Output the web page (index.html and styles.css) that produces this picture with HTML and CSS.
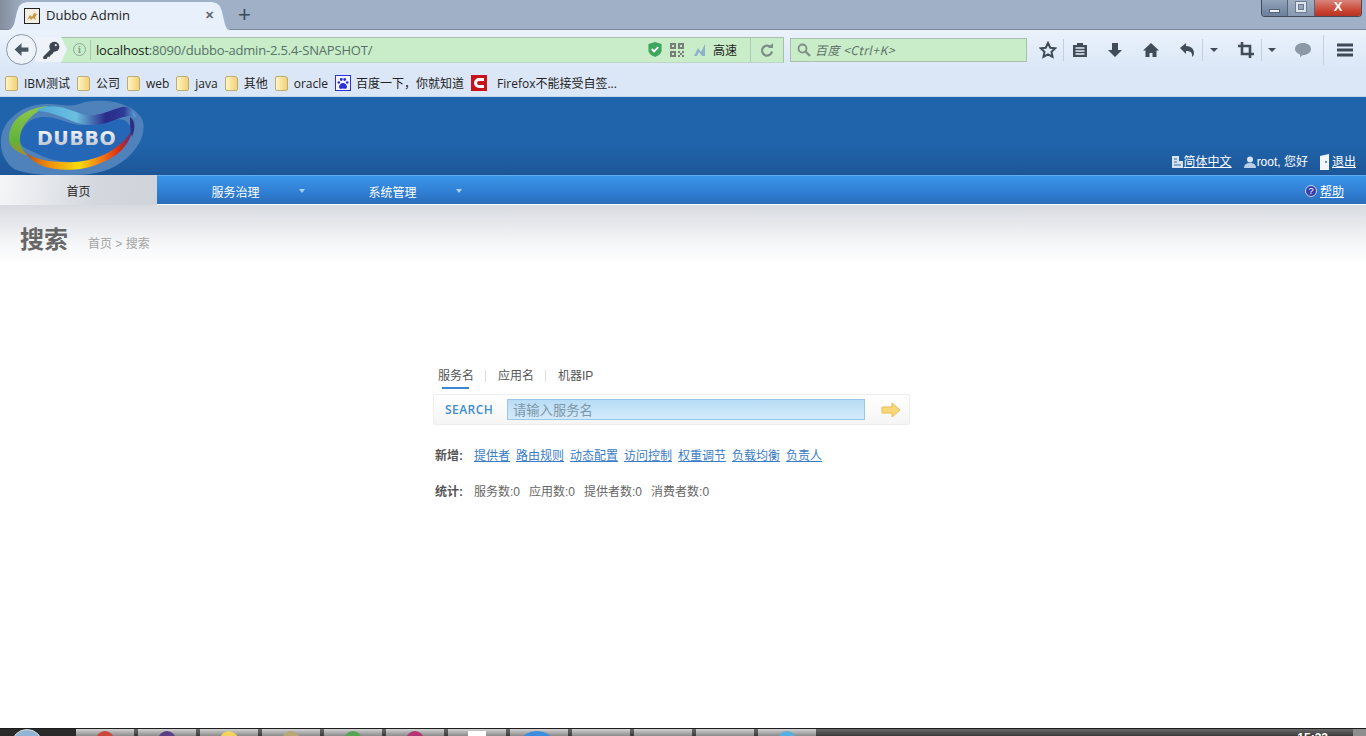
FILE: index.html
```html
<!DOCTYPE html>
<html lang="zh">
<head>
<meta charset="utf-8">
<title>Dubbo Admin</title>
<link rel="stylesheet" href="styles.css">
</head>
<body>
<div class="screen">
  <div class="browser">
    <div class="titlebar">
      <div class="tab">
        <svg class="favicon" viewBox="0 0 16 16"><rect x=".5" y=".5" width="15" height="15" fill="#f4efe2" stroke="#222"/><path d="M3 12l3-5 2 2 2-4 3 1-2 3 1 3-3-2-2 2-1-2z" fill="#c79440"/></svg>
        <span class="tab-title">Dubbo Admin</span>
        <span class="tab-close">✕</span>
      </div>
      <span class="new-tab">+</span>
      <div class="win-controls">
        <span class="win-btn"><i class="win-min"></i></span>
        <span class="win-btn win-mid"><i class="win-max"></i></span>
        <span class="win-btn win-close">X</span>
      </div>
    </div>
    <div class="toolbar">
      <div class="urlgroup">
        <span class="back">
          <svg viewBox="0 0 16 16" width="17" height="17"><path d="M8 2L1.500 8 8 14v-4h6.500V6H8z" fill="#4a5563"/></svg>
        </span>
        <span class="key">
          <svg viewBox="0 0 18 18" width="20" height="20"><circle cx="12" cy="6" r="4.500" fill="#3d4650"/><path d="M10 7L2 15v2h3l1-2h2l1-2h1l2-3z" fill="#3d4650"/><circle cx="13.300" cy="4.700" r="1" fill="#dfe8f2"/></svg>
        </span>
        <div class="urlbar">
          <span class="info">i</span>
          <span class="url"><b>localhost</b>:8090/dubbo-admin-2.5.4-SNAPSHOT/</span>
          <svg class="shield" viewBox="0 0 14 16" width="14" height="15"><path d="M0 2l7-2 7 2v7c0 3-3 5-7 7-4-2-7-4-7-7z" fill="#3ea65f"/><path d="M3.500 7.500l2.500 2.500 4.500-4.500" fill="none" stroke="#fff" stroke-width="2"/></svg>
          <svg class="qr" viewBox="0 0 14 14" width="14" height="14"><path d="M0 0h6v6H0zM8 0h6v6H8zM0 8h6v6H0zM8 8h2v2H8zM12 8h2v2h-2zM10 10h2v2h-2zM8 12h2v2H8zM12 12h2v2h-2z" fill="#777f78"/><path d="M2 2h2v2H2zM10 2h2v2h-2zM2 10h2v2H2z" fill="#c9edc9"/></svg>
          <svg class="speed" viewBox="0 0 14 14" width="14" height="14"><path d="M1 13L5 5l3 4 4-8v12H9L6 9l-2 4z" fill="#8fb0cf"/></svg>
          <span class="speed-text">高速</span>
          <span class="reload">
            <svg viewBox="0 0 14 14" width="14" height="14"><path d="M11 4.500A5 5 0 1 0 12 8.500" fill="none" stroke="#7b8f86" stroke-width="2.200"/><path d="M8 5h5V0z" fill="#7b8f86"/></svg>
          </span>
        </div>
      </div>
      <div class="searchbar">
        <svg viewBox="0 0 14 14" width="14" height="14"><circle cx="5.500" cy="5.500" r="4" fill="none" stroke="#7f8f85" stroke-width="1.800"/><path d="M8.500 8.500L13 13" stroke="#7f8f85" stroke-width="2.400"/></svg>
        <span class="search-hint">百度 &lt;Ctrl+K&gt;</span>
      </div>
      <div class="tools">
        <svg class="tool-star" viewBox="0 0 18 18" width="18" height="18"><path d="M9 2l2.200 4.700 5 .6-3.700 3.500 1 5.100L9 13.400l-4.500 2.500 1-5.100L1.800 7.300l5-.6z" fill="none" stroke="#3f4a57" stroke-width="2"/></svg>
        <i class="sep"></i>
        <svg class="tool-list" viewBox="0 0 16 16" width="16" height="16"><path d="M1 3h4V1h6v2h4v12H1z" fill="#414c59"/><path d="M3.500 6h9M3.500 9h9M3.500 12h9" stroke="#e4edf7" stroke-width="1.300"/></svg>
        <svg class="tool-down" viewBox="0 0 16 16" width="16" height="16"><path d="M5 1h6v7h4l-7 7-7-7h4z" fill="#414c59"/></svg>
        <svg class="tool-home" viewBox="0 0 16 16" width="16" height="16"><path d="M8 1L0 8.500h2.500V15h4v-4h3v4h4V8.500H16z" fill="#414c59"/></svg>
        <svg class="tool-undo" viewBox="0 0 16 16" width="16" height="16"><path d="M1 6l6-5v3c5 0 8 3 8 7 0 2-1 3-2 4 .5-4-1-6-6-6v3z" fill="#414c59"/></svg>
        <i class="sep sep-undo"></i>
        <span class="caret"></span>
        <svg class="tool-crop" viewBox="0 0 16 16" width="16" height="16"><path d="M4 0v12h12M0 4h12v12" fill="none" stroke="#414c59" stroke-width="2.600"/></svg>
        <i class="sep sep-crop"></i>
        <span class="caret caret-crop"></span>
        <svg class="tool-chat" viewBox="0 0 16 14" width="16" height="14"><path d="M8 0c4.500 0 8 2.500 8 6s-3.500 6-8 6l-3 2v-2.500C2 10.500 0 8.500 0 6c0-3.500 3.500-6 8-6z" fill="#8b98a6"/></svg>
        <i class="sep sep-menu"></i>
        <span class="hamburger"><i></i><i></i><i></i></span>
      </div>
    </div>
    <div class="bookmarks">
      <span class="bm"><i class="folder"></i>IBM测试</span>
      <span class="bm"><i class="folder"></i>公司</span>
      <span class="bm"><i class="folder"></i>web</span>
      <span class="bm"><i class="folder"></i>java</span>
      <span class="bm"><i class="folder"></i>其他</span>
      <span class="bm"><i class="folder"></i>oracle</span>
      <span class="bm bm-baidu"><svg viewBox="0 0 16 16" width="16" height="16"><rect width="16" height="16" fill="#2932d8"/><rect x="1" y="1" width="14" height="14" fill="#f4f4ff"/><path d="M8 8c2 0 4 2 4 4s-2 2-4 1.500C6 14 4 14 4 12s2-4 4-4z" fill="#2932d8"/><circle cx="3.800" cy="7.500" r="1.300" fill="#2932d8"/><circle cx="6.300" cy="4.500" r="1.400" fill="#2932d8"/><circle cx="9.700" cy="4.500" r="1.400" fill="#2932d8"/><circle cx="12.200" cy="7.500" r="1.300" fill="#2932d8"/></svg>百度一下，你就知道</span>
      <span class="bm bm-ff"><svg viewBox="0 0 16 16" width="16" height="16"><rect width="16" height="16" fill="#c8121c"/><path d="M13 4.500H8a3.500 3.500 0 0 0 0 7h5" fill="none" stroke="#fff" stroke-width="3"/></svg>Firefox不能接受自签...</span>
    </div>
  </div>

  <div class="site">
    <header class="site-head">
      <svg class="logo" viewBox="0 0 146 78" width="146" height="78">
        <defs>
          <linearGradient id="ring" x1="0" x2="1" y1="0" y2="0">
            <stop offset="0" stop-color="#b8531a"/>
            <stop offset=".2" stop-color="#ee8a0c"/>
            <stop offset=".5" stop-color="#f8dc0a"/>
            <stop offset=".72" stop-color="#f0741a"/>
            <stop offset=".88" stop-color="#d92c10"/>
            <stop offset="1" stop-color="#5a2a80"/>
          </linearGradient>
          <linearGradient id="ringtop" x1="0" x2="1" y1="0" y2="0">
            <stop offset="0" stop-color="#4fa9d8"/>
            <stop offset=".4" stop-color="#6bbfe0"/>
            <stop offset=".7" stop-color="#2a2a88"/>
            <stop offset=".88" stop-color="#2f3a96"/>
            <stop offset="1" stop-color="#5aabdd"/>
          </linearGradient>
          <linearGradient id="green" x1="0" x2="0" y1="0" y2="1">
            <stop offset="0" stop-color="#8cc84b"/>
            <stop offset=".7" stop-color="#62b23a"/>
            <stop offset="1" stop-color="#a88b2a"/>
          </linearGradient>
          <linearGradient id="word" x1="0" x2="0" y1="0" y2="1">
            <stop offset="0" stop-color="#fff"/>
            <stop offset="1" stop-color="#b4bdca"/>
          </linearGradient>
        </defs>
        <path d="M1 43C2 22 24 7 46 7c18 0 22 4 36-1 18-5 50-2 60 16 5 12-2 28-16 40-14 11-30 16-50 16-24 1-48 0-62-6C6 66 0 56 1 43z" fill="#4f82bb"/>
        <path d="M20 43C20 30 30 20 44 20c16 0 26 9 42 8 16-1 28-8 38-5 8 4 8 12 6 16-4 14-30 26-56 26-16 0-30-4-38-9-9-4-16-6-16-13z" fill="#2467b7"/>
        <path d="M48 9C26 11 10 22 9 40c-1 9 6 15 19 19-6-6-9-12-8-19 1-13 14-25 28-31z" fill="url(#green)"/>
        <path d="M26 56c10 7 28 10 48 9 24-1 48-14 58-32-2 18-22 34-52 39-24 3-46-2-54-16z" fill="url(#ring)"/>
        <path d="M36 14C50 4 68 12 82 17c14 4 26-3 40-7 8-1 12 3 14 10-10-3-16 2-30 6-10 3-22 3-34-2C60 19 48 14 36 14z" fill="url(#ringtop)"/>
        <path d="M130 20c6 4 5 12 2 20-2-6-2-14-2-20z" fill="#2f2f80"/>
        <text class="logo-word" x="37" y="48" fill="url(#word)">DUBBO</text>
      </svg>
      <div class="head-links">
        <span class="head-link"><svg viewBox="0 0 11 12" width="11" height="12"><path d="M0 0h7v12H0zM7 5h4v7H7z" fill="#d7e2ee"/><path d="M2 3h3M2 6h3M2 9h7" stroke="#3b6ea5"/></svg><a href="#">简体中文</a></span>
        <span class="head-link"><svg viewBox="0 0 12 12" width="12" height="12"><circle cx="6" cy="3.500" r="3" fill="#d7e2ee"/><path d="M0 12c0-4 3-5 6-5s6 1 6 5z" fill="#b9cfe6"/></svg>root, 您好</span>
        <span class="head-link"><svg viewBox="0 0 12 16" width="12" height="16"><path d="M1 2l9-2v16H1z" fill="#f2f6fb"/><circle cx="7" cy="8" r="1" fill="#3b6ea5"/></svg><a href="#">退出</a></span>
      </div>
    </header>
    <nav class="site-nav">
      <a class="nav-item nav-active" href="#">首页</a>
      <a class="nav-item" href="#">服务治理<i class="nav-arrow"></i></a>
      <a class="nav-item" href="#">系统管理<i class="nav-arrow"></i></a>
      <span class="nav-help"><span class="help-icon">?</span><a href="#">帮助</a></span>
    </nav>
    <div class="crumbs">
      <h1>搜索</h1>
      <span class="crumb-path">首页 &gt; 搜索</span>
    </div>
    <main class="panel">
      <div class="search-tabs">
        <span class="stab stab-on">服务名</span>
        <span class="stab">应用名</span>
        <span class="stab stab-last">机器IP</span>
      </div>
      <div class="search-box">
        <span class="search-label">SEARCH</span>
        <input class="search-input" type="text" placeholder="请输入服务名">
        <svg class="go" viewBox="0 0 20 16" width="20" height="16"><path d="M1 5h10V1l8 7-8 7v-4H1z" fill="#f7d777" stroke="#e8bd52"/></svg>
      </div>
      <p class="line line-add">
        <b>新增:</b>
        <a href="#">提供者</a><a href="#">路由规则</a><a href="#">动态配置</a><a href="#">访问控制</a><a href="#">权重调节</a><a href="#">负载均衡</a><a href="#">负责人</a>
      </p>
      <p class="line line-stat">
        <b>统计:</b>
        <span>服务数:0</span><span>应用数:0</span><span>提供者数:0</span><span>消费者数:0</span>
      </p>
    </main>
  </div>

  <footer class="taskbar">
    <span class="start"></span>
    <span class="task"><i class="dot dot-red"></i></span>
    <span class="task"><i class="dot dot-purple"></i></span>
    <span class="task"><i class="dot dot-yellow"></i></span>
    <span class="task"><i class="dot dot-tan"></i></span>
    <span class="task"><i class="dot dot-green"></i></span>
    <span class="task"><i class="dot dot-pink"></i></span>
    <span class="task"><i class="dot dot-white"></i></span>
    <span class="task"><i class="dot dot-blue"></i></span>
    <span class="task"></span>
    <span class="task"></span>
    <span class="task"></span>
    <span class="task"><i class="dot dot-sky"></i></span>
    <span class="clock">15:33</span>
    <span class="desk"></span>
  </footer>
</div>
</body>
</html>
```

FILE: styles.css
```css
* { box-sizing: border-box; }
html, body { margin: 0; height: 100%; overflow: hidden; background: #fff; }
body { font-family: "Liberation Sans", "Noto Sans CJK SC", sans-serif; font-size: 12px; color: #555; }
.screen { height: 736px; display: flex; flex-direction: column; }

/* browser chrome */
.browser { height: 97px; flex: none; background: #dbe7f7; border-bottom: 1px solid #c2d4ea; }
.titlebar { height: 30px; display: flex; align-items: flex-end; padding-left: 8px; background: linear-gradient(90deg, #838d9c, #a0b0c6 24px), #a0b0c6; border-bottom: 1px solid #7b8797; position: relative; }
.tab { width: 222px; height: 28px; margin-bottom: -1px; padding: 0 16px 0 16px; display: flex; align-items: center; background: #e8f1fb; clip-path: polygon(0 100%, 3px 96%, 6px 80%, 9px 35%, 11px 15%, 14px 5%, 19px 0, 204px 0, 209px 5%, 212px 15%, 214px 35%, 217px 80%, 219px 96%, 100% 100%); color: #222; }
.favicon { width: 16px; height: 16px; flex: none; }
.tab-title { font-family: "Open Sans", sans-serif; font-size: 13px; margin: -2px 0 0 6px; flex: 1; }
.tab-close { font-size: 11px; font-weight: 700; color: #5c6670; margin-top: -1px; }
.new-tab { font-family: "Liberation Sans", sans-serif; font-size: 22px; line-height: 26px; color: #3d4a5a; margin-left: 8px; align-self: center; }
.win-controls { position: absolute; right: 4px; top: 0; height: 17px; display: flex; border: 1px solid #414b58; border-top: 0; border-radius: 0 0 4px 4px; overflow: hidden; }
.win-btn { width: 26px; display: flex; align-items: center; justify-content: center; background: linear-gradient(#93a4ba, #6b7e9a); border-right: 1px solid #56647a; }
.win-mid { width: 27px; background: linear-gradient(#9fafc3, #8698b0); }
.win-min { width: 11px; height: 4px; margin-top: 5px; background: #eef2f7; border: 1px solid #54627a; }
.win-max { width: 10px; height: 10px; margin-top: -3px; border: 2px solid #dde4ec; box-shadow: inset 0 0 0 1px #6b7a90, 0 0 0 1px #6b7a90; }
.win-close { width: 46px; border-right: 0; background: linear-gradient(#d8857a, #c9412f 70%, #b53525); color: #fff; font-weight: 700; font-size: 13px; line-height: 14px; align-items: flex-start; }

.toolbar { height: 36px; display: flex; align-items: center; padding: 3px 0 0 6px; background: linear-gradient(#eaf2fb, #dce8f8); }
.urlgroup { width: 778px; flex: none; height: 26px; display: flex; align-items: center; position: relative; }
.back { width: 31px; height: 31px; flex: none; border-radius: 50%; border: 1px solid #8a97a6; background: #eef3fa; display: flex; align-items: center; justify-content: center; z-index: 1; }
.key { width: 32px; height: 25px; flex: none; display: flex; align-items: center; justify-content: center; margin-left: -2px; background: #eef3fa; }
.urlbar { flex: 1; height: 26px; margin-left: -6px; display: flex; align-items: center; background: #c8edc8; border: 1px solid #a8c0ac; border-left: 0; padding-left: 12px; clip-path: polygon(0 0, 100% 0, 100% 100%, 0 100%, 6px 50%); }
.info { width: 13px; height: 13px; flex: none; border: 1px solid #8da799; border-radius: 50%; color: #7d9b8b; font: 700 10px/11px "Liberation Serif", serif; text-align: center; }
.url { font-family: "Open Sans", sans-serif; font-size: 13px; color: #57716a; margin-left: 4px; padding-left: 5px; border-left: 1px solid #a9c6af; line-height: 20px; flex: 1; white-space: nowrap; letter-spacing: -.18px; }
.url b { color: #1b1f1c; font-weight: 400; }
.shield { flex: none; }
.qr { flex: none; margin-left: 8px; }
.speed { flex: none; margin-left: 9px; }
.speed-text { font-family: "Noto Sans CJK SC", sans-serif; font-size: 12px; color: #222; margin-left: 6px; width: 37px; flex: none; }
.reload { width: 33px; flex: none; height: 24px; display: flex; align-items: center; justify-content: center; border-left: 1px solid #aecbb3; }
.searchbar { width: 237px; height: 24px; margin-left: 6px; flex: none; display: flex; align-items: center; gap: 4px; padding-left: 6px; background: #c8edc8; border: 1px solid #a8c0ac; }
.search-hint { font-family: "Noto Sans CJK SC", sans-serif; font-style: italic; font-size: 12px; color: #61736a; letter-spacing: .5px; }
.tools { flex: 1; display: flex; align-items: center; height: 30px; position: relative; }
.tools svg, .tools .sep, .tools .caret, .tools .hamburger { position: absolute; top: 50%; transform: translateY(-50%); }
.tool-star { left: 12px; }
.sep { width: 1px; height: 22px; background: #c3d0df; left: 36px; }
.tool-list { left: 45px; }
.tool-down { left: 80px; }
.tool-home { left: 116px; }
.tool-undo { left: 152px; }
.sep-undo { left: 175px; }
.caret { width: 0; height: 0; border: 4px solid transparent; border-top-color: #414c59; border-bottom: 0; left: 183px; }
.tool-crop { left: 211px; }
.sep-crop { left: 234px; }
.caret-crop { left: 241px; }
.tool-chat { left: 268px; }
.sep-menu { left: 296px; height: 30px; }
.hamburger { left: 310px; width: 16px; display: flex; flex-direction: column; gap: 2px; }
.hamburger i { display: block; height: 3px; background: #3f4a57; }

.bookmarks { height: 30px; display: flex; align-items: center; padding: 4px 0 0 5px; font-family: "Open Sans", "Noto Sans CJK SC", sans-serif; font-size: 12px; color: #222; }
.bm { display: inline-flex; align-items: center; margin-right: 7px; white-space: nowrap; }
.folder { width: 13px; height: 15px; margin-right: 6px; border-radius: 2px 3px 2px 2px; background: linear-gradient(90deg, #fff4c4, #f2d273); border: 1px solid #bdaa75; }
.bm-baidu svg { margin-right: 5px; }
.bm-ff svg { margin-right: 10px; }

/* site */
.site { flex: 1; min-height: 0; }
.site-head { height: 78px; display: flex; justify-content: space-between; align-items: flex-end; background: linear-gradient(#2064ab 60%, #1d5697); }
.logo { display: block; align-self: flex-start; }
.logo-word { font-family: "DejaVu Sans", sans-serif; font-weight: 700; font-size: 19px; letter-spacing: .6px; }
.head-links { display: flex; gap: 11px; padding: 0 10px 5px 0; color: #fff; }
.head-link { display: inline-flex; align-items: center; gap: 1px; line-height: 16px; }
.head-link:first-child { margin-right: 1px; }
.head-link a, .nav-help a { color: #fff; text-decoration: underline; }
.site-nav { height: 30px; display: flex; align-items: center; color: #fff; background: linear-gradient(#3b95e8, #2f7ed3 60%, #2a6cb9); border-top: 1px solid #63abef; border-bottom: 1px solid #fff; position: relative; }
.nav-item { width: 157px; height: 100%; padding-top: 2px; position: relative; display: flex; align-items: center; justify-content: center; color: #fff; text-decoration: none; }
.nav-active { color: #222; background: linear-gradient(100deg, #f5f6f8, #d4d8de 60%, #cfd3da); margin-top: -1px; height: 30px; }
.nav-arrow { position: absolute; left: 142px; top: 13px; width: 0; height: 0; border: 3px solid transparent; border-top: 4px solid #a9d2f5; border-bottom: 0; }
.nav-help { position: absolute; right: 22px; top: 6px; display: flex; align-items: center; gap: 3px; }
.help-icon { width: 12px; height: 12px; border-radius: 50%; background: #3a3fa8; border: 1px solid #c5d6ee; color: #fff; font-size: 9px; line-height: 10px; text-align: center; }
.crumbs { height: 58px; padding: 15px 0 0 20px; display: flex; align-items: flex-start; background: linear-gradient(#d7dae0, #f3f4f6 60%, #fff); }
.crumbs h1 { margin: 0; font-size: 24px; line-height: 40px; font-weight: 700; color: #666; }
.crumb-path { margin: 15px 0 0 20px; color: #a3a3a3; line-height: 18px; }

.panel { margin: 104px 0 0 433px; width: 477px; }
.search-tabs { height: 27px; padding-left: 5px; display: flex; align-items: flex-start; color: #555; }
.stab { line-height: 18px; margin-right: 12px; padding-right: 12px; position: relative; }
.stab::after { content: ""; position: absolute; right: 0; top: 3px; width: 1px; height: 12px; background: #ddd; }
.stab-last::after { display: none; }
.stab-on::before { content: ""; position: absolute; left: 4px; right: 17px; top: 20px; height: 2px; background: #3a87d0; }
.search-box { height: 31px; display: flex; align-items: center; background: linear-gradient(#fff, #f5f5f5); border: 1px solid #eee; border-radius: 2px; padding-left: 11px; }
.search-label { width: 62px; flex: none; font-family: "Open Sans", sans-serif; font-weight: 600; font-size: 12px; letter-spacing: .45px; color: #3e8dd0; }
.search-input { width: 358px; height: 21px; flex: none; padding: 0 5px; border: 1px solid #9cc6e8; background: linear-gradient(#b8dcf5, #d3eafa); font: 13.300px "Noto Sans CJK SC", sans-serif; outline: 0; }
.search-input::placeholder { color: #7d97a9; opacity: 1; }
.go { margin-left: 16px; flex: none; }
.line { margin: 0; padding-left: 2px; display: flex; line-height: 18px; color: #666; }
.line b { width: 39px; flex: none; color: #555; }
.line-add { margin-top: 22px; }
.line-add a { color: #3a7cc5; text-decoration: underline; margin-right: 6px; }
.line-stat { margin-top: 18px; }
.line-stat span { margin-right: 9px; }

/* taskbar */
.taskbar { height: 8px; flex: none; display: flex; overflow: hidden; background: linear-gradient(#6a6a6a, #3a3a3a); border-top: 1px solid #1c1c1c; color: #fff; position: relative; }
.start { width: 76px; flex: none; position: relative; background: #2a2a2a; }
.start::after { content: ""; position: absolute; left: 11px; top: 0; width: 30px; height: 30px; border-radius: 50%; background: #8fb4d6; border: 1px solid #ddd; }
.task { width: 58px; margin-right: 4px; flex: none; position: relative; background: linear-gradient(#d2d2d2, #8a8a8a); }
.dot { position: absolute; left: 20px; top: 2px; width: 18px; height: 18px; border-radius: 50%; }
.dot-red { background: #c9483a; }
.dot-purple { background: #5c3f86; }
.dot-yellow { background: #f2d35e; }
.dot-tan { background: #b9a777; }
.dot-green { background: #56a356; }
.dot-pink { background: #b43574; }
.dot-white { background: #fff; border-radius: 0; }
.dot-blue { background: #3b8de0; width: 30px; left: 12px; }
.dot-sky { background: #57aee0; }
.clock { position: absolute; right: 38px; top: 0; font-size: 12px; line-height: 18px; font-weight: 700; }
.desk { position: absolute; right: 0; top: 0; width: 13px; height: 8px; background: #8e8e8e; }
```
